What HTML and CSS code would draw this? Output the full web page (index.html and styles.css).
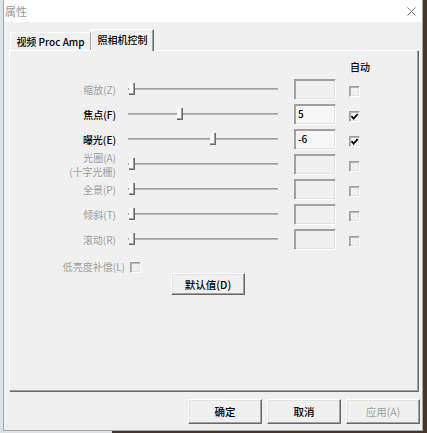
FILE: index.html
```html
<!DOCTYPE html>
<html lang="zh-CN">
<head>
<meta charset="utf-8">
<title>属性</title>
<link rel="stylesheet" href="styles.css">
</head>
<body>
<div class="window">
  <div class="titlebar">
    <span class="title">属性</span>
    <svg class="close" width="9" height="9" viewBox="0 0 9 9"><path d="M0.5 0.5 L8.5 8.5 M8.5 0.5 L0.5 8.5" stroke="#808080" stroke-width="1" fill="none"/></svg>
  </div>
  <div class="client">
    <div class="tabs">
      <div class="tab">视频 Proc Amp</div>
      <div class="tab active">照相机控制</div>
    </div>
    <div class="panel">
      <div class="auto-head">自动</div>
      <div class="rows">
        <div class="row disabled">
          <div class="label">缩放(Z)</div>
          <div class="slider"><div class="track"></div><div class="thumb" style="left:3px"></div></div>
          <div class="edit"></div>
          <div class="check"></div>
        </div>
        <div class="row">
          <div class="label">焦点(F)</div>
          <div class="slider"><div class="track"></div><div class="thumb" style="left:51px"></div></div>
          <div class="edit on">5</div>
          <div class="check on"><svg width="9" height="9" viewBox="0 0 9 9"><path d="M1.5 4.2 L3.6 6.6 L7.8 2" stroke="#000" stroke-width="1.8" fill="none"/></svg></div>
        </div>
        <div class="row">
          <div class="label">曝光(E)</div>
          <div class="slider"><div class="track"></div><div class="thumb" style="left:84px"></div></div>
          <div class="edit on">-6</div>
          <div class="check on"><svg width="9" height="9" viewBox="0 0 9 9"><path d="M1.5 4.2 L3.6 6.6 L7.8 2" stroke="#000" stroke-width="1.8" fill="none"/></svg></div>
        </div>
        <div class="row disabled">
          <div class="label two">光圈(A)<br>(十字光栅)</div>
          <div class="slider"><div class="track"></div><div class="thumb" style="left:3px"></div></div>
          <div class="edit"></div>
          <div class="check"></div>
        </div>
        <div class="row disabled">
          <div class="label">全景(P)</div>
          <div class="slider"><div class="track"></div><div class="thumb" style="left:3px"></div></div>
          <div class="edit"></div>
          <div class="check"></div>
        </div>
        <div class="row disabled">
          <div class="label">倾斜(T)</div>
          <div class="slider"><div class="track"></div><div class="thumb" style="left:3px"></div></div>
          <div class="edit"></div>
          <div class="check"></div>
        </div>
        <div class="row disabled">
          <div class="label">滚动(R)</div>
          <div class="slider"><div class="track"></div><div class="thumb" style="left:3px"></div></div>
          <div class="edit"></div>
          <div class="check"></div>
        </div>
      </div>
      <div class="lowlight">
        <span class="low-label">低亮度补偿(L)</span>
        <span class="check"></span>
      </div>
      <div class="btn default">默认值(D)</div>
    </div>
    <div class="buttons">
      <div class="btn">确定</div>
      <div class="btn">取消</div>
      <div class="btn off">应用(A)</div>
    </div>
  </div>
</div>
</body>
</html>
```
FILE: styles.css
```css
html, body {
  margin: 0;
  padding: 0;
}
body {
  width: 427px;
  height: 433px;
  overflow: hidden;
  background: linear-gradient(to right, #dde2e8 0 112px, #4b3528 112px);
  font-family: "Noto Sans CJK SC", "Noto Sans", sans-serif;
  font-size: 10px;
  font-weight: 500;
  color: #000;
}
.window {
  margin-left: 3px;
  width: 420px;
  height: 431px;
  box-sizing: border-box;
  border-left: 1px solid #a8a8a8;
  border-right: 1px solid #a8a8a8;
  border-bottom: 1px solid #a8a8a8;
  display: flex;
  flex-direction: column;
}
.titlebar {
  height: 22px;
  flex: none;
  background: #fff;
  display: flex;
  align-items: center;
  justify-content: space-between;
  padding: 0 6px 0 1px;
}
.title {
  color: #999;
  font-size: 11px;
  font-weight: 400;
  line-height: 13px;
}
.close {
  display: block;
  margin-top: 1px;
}
.client {
  flex: 1;
  background: #f0f0f0;
  padding: 7px 0 0 5px;
}
.tabs {
  display: flex;
  align-items: flex-end;
  height: 21px;
  padding-left: 1px;
}
.tab {
  box-sizing: border-box;
  width: 81px;
  height: 18px;
  border-top: 1px solid #fff;
  border-left: 1px solid #fff;
  border-right: 1px solid #a0a0a0;
  background: #f0f0f0;
  display: flex;
  align-items: center;
  justify-content: center;
  line-height: 13px;
}
.tab.active {
  position: relative;
  z-index: 1;
  width: 63px;
  height: 22px;
  margin-bottom: -1px;
  padding-bottom: 2px;
  border-right: 1px solid #696969;
  box-shadow: inset -1px 0 0 #a0a0a0;
}
.panel {
  box-sizing: border-box;
  width: 409px;
  height: 341px;
  border-top: 1px solid #fff;
  border-left: 1px solid #fff;
  border-right: 1px solid #a0a0a0;
  border-bottom: 1px solid #a0a0a0;
  box-shadow: 1px 1px 0 #696969;
  padding-top: 9px;
}
.auto-head {
  padding-left: 340px;
  height: 13px;
  line-height: 13px;
}
.rows {
  margin-top: 6px;
  display: flex;
  flex-direction: column;
  gap: 4px;
}
.row {
  display: flex;
  align-items: center;
  height: 21px;
}
.label {
  width: 106px;
  flex: none;
  text-align: right;
  line-height: 13px;
  white-space: nowrap;
}
.label.two {
  line-height: 14px;
}
.disabled .label,
.low-label {
  color: #a0a0a0;
  font-weight: 400;
}
.slider {
  position: relative;
  flex: none;
  width: 154px;
  height: 12px;
  margin-left: 10px;
  margin-bottom: 1px;
}
.track {
  position: absolute;
  left: 2px;
  right: 2px;
  top: 5px;
  height: 1px;
  background: #a0a0a0;
  border-bottom: 1px solid #b8b8b8;
}
.thumb {
  position: absolute;
  top: 0;
  box-sizing: border-box;
  width: 6px;
  height: 12px;
  background: #fafafa;
  border-right: 1px solid #696969;
  border-bottom: 1px solid #696969;
  box-shadow: inset -1px -1px 0 #a0a0a0, inset 1px 1px 0 #fff;
}
.edit {
  box-sizing: border-box;
  flex: none;
  width: 42px;
  height: 21px;
  margin-left: 14px;
  border: 1px solid;
  border-color: #a0a0a0 #fff #fff #a0a0a0;
  box-shadow: inset 1px 1px 0 #a0a0a0, inset -1px -1px 0 #e3e3e3;
  background: #f0f0f0;
  padding: 0 0 0 3px;
  line-height: 17px;
}
.edit.on {
  background: #f6f6f6;
}
.check {
  box-sizing: border-box;
  flex: none;
  width: 11px;
  height: 11px;
  margin-left: 13px;
  margin-top: 4px;
  border: 1px solid;
  border-color: #a0a0a0 #fff #fff #a0a0a0;
  box-shadow: inset 1px 1px 0 #b4b4b4, inset -1px -1px 0 #e3e3e3;
  background: #f0f0f0;
  display: flex;
  align-items: center;
  justify-content: center;
}
.check.on {
  background: #fff;
}
.check svg {
  display: block;
}
.lowlight {
  margin-top: 11px;
  display: flex;
  align-items: center;
  height: 12px;
}
.low-label {
  width: 115px;
  text-align: right;
  line-height: 12px;
}
.lowlight .check {
  margin-left: 5px;
  margin-top: 0;
}
.btn {
  box-sizing: border-box;
  width: 74px;
  height: 25px;
  border: 1px solid;
  border-color: #fff #696969 #696969 #fff;
  box-shadow: inset -1px -1px 0 #a0a0a0, inset 1px 1px 0 #e3e3e3;
  background: #f0f0f0;
  display: flex;
  align-items: center;
  justify-content: center;
  font-size: 10.5px;
  line-height: 13px;
}
.btn.default {
  margin-left: 161px;
  height: 22px;
}
.btn.off {
  color: #a0a0a0;
  font-weight: 400;
}
.buttons {
  display: flex;
  justify-content: flex-end;
  gap: 5px;
  margin-top: 8px;
  padding-right: 2px;
}
```
